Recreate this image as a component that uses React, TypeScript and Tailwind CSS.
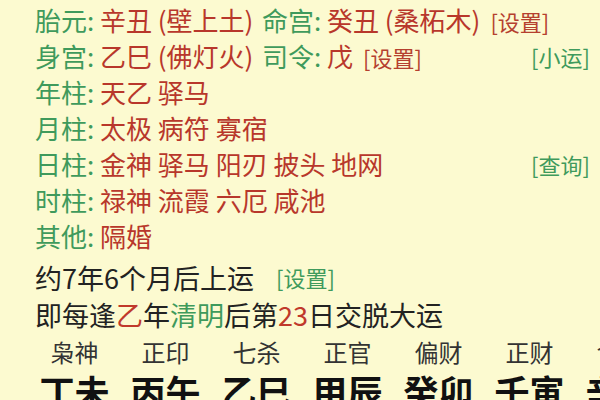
const font = { fontFamily: '"Noto Sans CJK SC", "Noto Sans", sans-serif' };

const gods = ["枭神", "正印", "七杀", "正官", "偏财", "正财", "食神"];
const pillars = ["丁未", "丙午", "乙巳", "甲辰", "癸卯", "壬寅", "辛丑"];

function Label({ children }: { children: React.ReactNode }) {
  return <span className="w-[65px] shrink-0 text-[#3f9a5c]">{children}</span>;
}

function Tag({ children }: { children: React.ReactNode }) {
  return <span className="text-[22px] text-[#b5402f]">[{children}]</span>;
}

function Row({ label, children, right }: { label: string; children: React.ReactNode; right?: string }) {
  return (
    <div className="flex h-[36px] items-center pl-[35px] pr-[10px]">
      <Label>{label}:</Label>
      <div className="flex flex-1 items-center text-[#b8372b]">{children}</div>
      {right && <span className="text-[22px] text-[#3f9a5c]">[{right}]</span>}
    </div>
  );
}

export default function App() {
  return (
    <div
      className="h-[400px] w-[600px] overflow-hidden bg-[#fcfad0] pt-[2px] text-[26px] leading-none"
      style={font}
    >
      <Row label="胎元">
        <span className="w-[162px]">辛丑 (壁上土)</span>
        <Label>命宫:</Label>
        <span>癸丑 (桑柘木)</span>
        <span className="ml-[10px]"><Tag>设置</Tag></span>
      </Row>
      <Row label="身宫" right="小运">
        <span className="w-[162px]">乙巳 (佛灯火)</span>
        <Label>司令:</Label>
        <span>戊</span>
        <span className="ml-[10px]"><Tag>设置</Tag></span>
      </Row>
      <Row label="年柱">天乙 驿马</Row>
      <Row label="月柱">太极 病符 寡宿</Row>
      <Row label="日柱" right="查询">金神 驿马 阳刃 披头 地网</Row>
      <Row label="时柱">禄神 流霞 六厄 咸池</Row>
      <Row label="其他">隔婚</Row>

      <div className="mt-[5px] flex h-[36px] items-center pl-[35px] text-[27px] text-[#222]">
        <span>约7年6个月后上运</span>
        <span className="ml-[22px] text-[22px] text-[#3f9a5c]">[设置]</span>
      </div>
      <div className="flex h-[38px] items-center pl-[35px] text-[27px] text-[#222]">
        即每逢<span className="text-[#c0392b]">乙</span>年
        <span className="text-[#3f9a5c]">清明</span>后第
        <span className="text-[#c0392b]">23</span>日交脱大运
      </div>

      <div className="grid grid-cols-[repeat(7,91px)] pl-[29px]">
        {gods.map((g) => (
          <div key={g} className="flex h-[37px] items-center justify-center text-[24px] text-[#333]">
            {g}
          </div>
        ))}
        {pillars.map((p) => (
          <div key={p} className="flex h-[40px] items-center justify-center text-[35px] font-bold text-[#111]">
            {p}
          </div>
        ))}
      </div>
    </div>
  );
}
